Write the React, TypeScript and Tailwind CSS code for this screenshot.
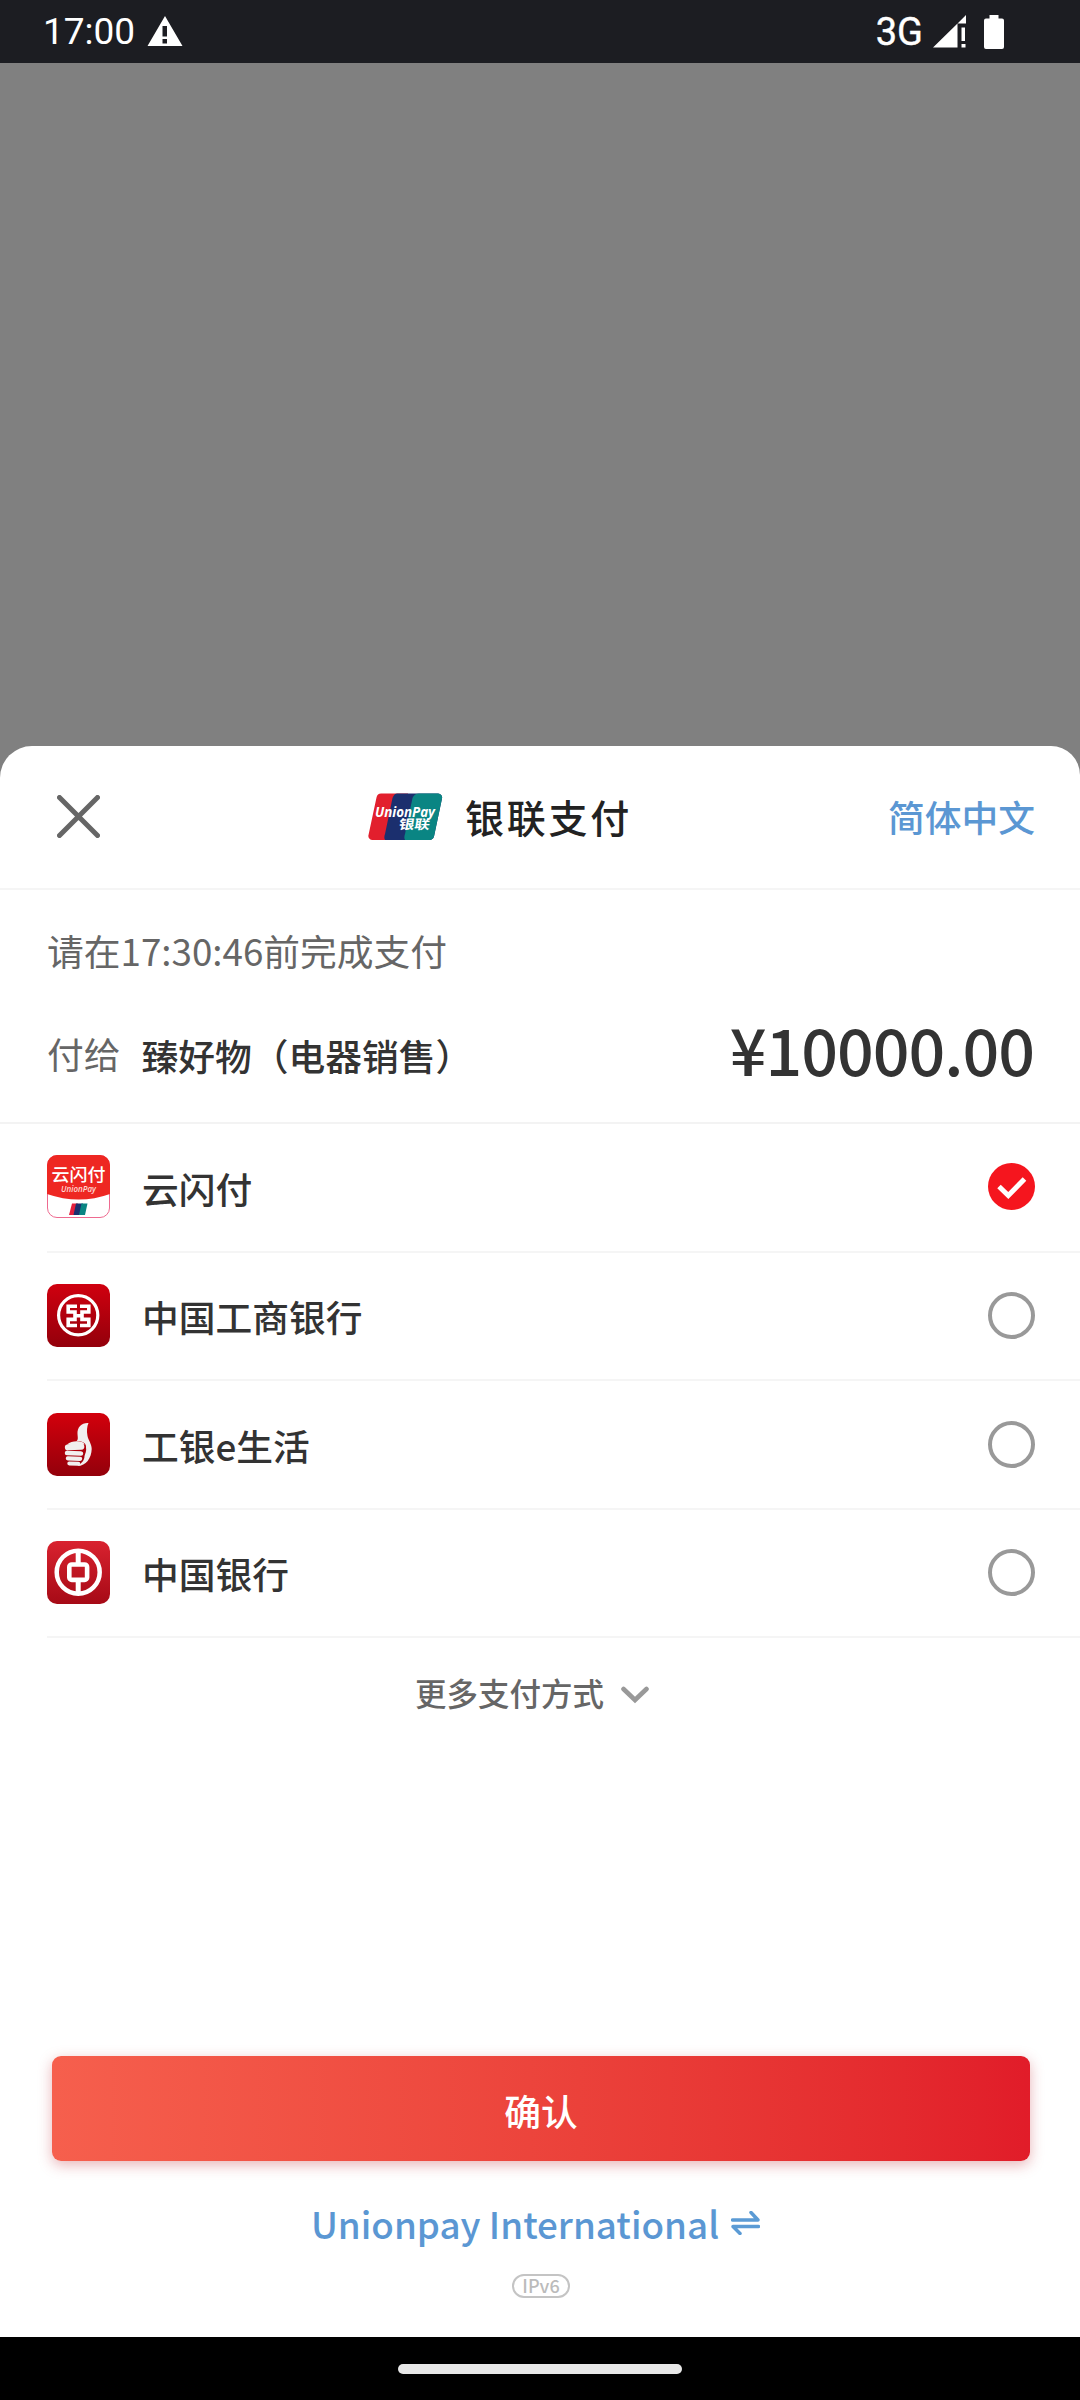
import { useState } from "react";
import type { ReactNode } from "react";

function StatusBar() {
  return (
    <div className="flex h-[63px] items-center justify-between bg-[#1c1d22] pl-[43px] pr-[76px] font-['Roboto',sans-serif] text-white">
      <div className="flex items-center">
        <span className="text-[37px] leading-[60px]">17:00</span>
        <svg width="36" height="32" viewBox="0 0 36 32" className="ml-[12px]">
          <path
            fill="#fff"
            fillRule="evenodd"
            d="M18 0 35.500 30H.5ZM15.500 10v10.500h4.500V10Zm0 13v4.500h4.500V23Z"
          />
        </svg>
      </div>
      <div className="flex items-center">
        <span className="text-[38px] leading-[60px] [-webkit-text-stroke:0.400px_white]">3G</span>
        <svg width="34" height="34" viewBox="0 0 34 34" className="mb-[2px] ml-[10px]">
          <path
            fill="#fff"
            d="M0 33.500 24.500 9.500V33.500ZM33 1v8.500H24.500ZM28.500 13.500h3.500V27h-3.500ZM28.500 30h4v3.500h-4Z"
          />
        </svg>
        <svg width="20" height="34" viewBox="0 0 20 34" className="ml-[17px]">
          <path
            fill="#fff"
            d="M5.500 0h9v3.500H18a2 2 0 0 1 2 2V32a2 2 0 0 1-2 2H2a2 2 0 0 1-2-2V5.500a2 2 0 0 1 2-2h3.500Z"
          />
        </svg>
      </div>
    </div>
  );
}

function UnionPayLogo() {
  return (
    <svg width="75" height="48" viewBox="0 0 75 48" className="mt-[2px] overflow-visible">
      <defs>
        <clipPath id="card">
          <path d="M14 0.500H70a4 4 0 0 1 4 5L66 43.500a5 5 0 0 1-4.500 3.500H4a4 4 0 0 1-3.500-5L8.500 4.500a5 5 0 0 1 5.500-4Z" />
        </clipPath>
      </defs>
      <g clipPath="url(#card)">
        <path fill="#e21f2d" d="M0 0h40v48H0Z" />
        <path fill="#1b2f6e" d="M29 0h46v48H19Q15 47 17 41L24.500 5Q26 1 29 0Z" />
        <path fill="#0a8583" d="M51 0h24v48H39Q35 47 37 41L44.500 5Q46 1 51 0Z" />
      </g>
      <text
        x="7"
        y="23.500"
        textLength="60"
        lengthAdjust="spacingAndGlyphs"
        className="fill-white font-['Open_Sans',sans-serif] text-[14.500px] font-bold italic"
      >
        UnionPay
      </text>
      <text
        x="36"
        y="36.500"
        transform="skewX(-9)"
        textLength="31"
        lengthAdjust="spacingAndGlyphs"
        className="fill-white font-['Noto_Sans_CJK_SC',sans-serif] text-[13px] font-bold"
      >
        银联
      </text>
    </svg>
  );
}

function YunShanFuIcon() {
  return (
    <svg width="63" height="63" viewBox="0 0 63 63" className="mb-[2px]">
      <defs>
        <clipPath id="ysf">
          <rect width="63" height="63" rx="10" />
        </clipPath>
      </defs>
      <rect x=".5" y=".5" width="62" height="62" rx="9.500" fill="#fff" stroke="#ee6a90" />
      <path clipPath="url(#ysf)" fill="#ee2722" d="M0 0h63v39Q32 50 0 39Z" />
      <text
        x="4.500"
        y="25.500"
        textLength="54"
        lengthAdjust="spacingAndGlyphs"
        className="fill-white font-['Noto_Sans_CJK_SC',sans-serif] text-[17px] font-medium"
      >
        云闪付
      </text>
      <text
        x="14"
        y="37"
        textLength="35"
        lengthAdjust="spacingAndGlyphs"
        className="fill-[#ffd9d4] font-['Open_Sans',sans-serif] text-[8.500px] font-semibold italic"
      >
        UnionPay
      </text>
      <path fill="#e21f3d" d="M25 48.500h6l-3 11.500h-6Z" />
      <path fill="#1b2f6e" d="M29 48.500h7l-3 11.500h-6.500Z" />
      <path fill="#0a8583" d="M34.500 48.500h6L38 60h-6Z" />
    </svg>
  );
}

function BankTile({ from, to, id, children }: { from: string; to: string; id: string; children: ReactNode }) {
  return (
    <svg width="63" height="63" viewBox="0 0 63 63" fill="none">
      <defs>
        <linearGradient id={id} x1="0" y1="0" x2="0" y2="1">
          <stop stopColor={from} />
          <stop offset="1" stopColor={to} />
        </linearGradient>
      </defs>
      <rect width="63" height="63" rx="10" fill={`url(#${id})`} />
      {children}
    </svg>
  );
}

function IcbcIcon() {
  return (
    <BankTile id="icbc" from="#d0000f" to="#93000b">
      <g stroke="#fff">
        <circle cx="31.200" cy="31.200" r="19.600" strokeWidth="3.200" />
        <path
          strokeWidth="3.600"
          d="M30 22.300H21.200V28H28V31.700M30 41.500H21.200V35.400H28V31.700M33 22.300H41.800V28H35V31.700M33 41.500H41.800V35.400H35V31.700M26.500 31.700H36.500"
        />
      </g>
    </BankTile>
  );
}

function ELifeIcon() {
  return (
    <BankTile id="elife" from="#d3000c" to="#93000b">
      {/* thumb and palm */}
      <path
        fill="#f1efef"
        d="M41.500 10C35 9.500 30 14 30.500 21C30.800 25 31.500 27 29 28.500C35 27.500 39.500 30 39 34.500C39.800 38 38 41 37.500 43C37.500 47 35 50 30.500 53C39 53 44.500 45 44.700 36C44.700 31 41.500 27.500 40.500 23C39.500 18 40 13.500 41.500 10Z"
      />
      {/* fingers */}
      <g fill="#f1efef">
        <path d="M20 31.500Q25 27.500 33 28.500Q37 29 37.500 31.500L30 33Z" />
        <rect x="17.800" y="31" width="19.500" height="6" rx="3" transform="rotate(-3 28 33)" />
        <rect x="17.800" y="38" width="18.500" height="4.600" rx="2.300" transform="rotate(2 28 39)" />
        <rect x="18.800" y="43.500" width="16.500" height="4.200" rx="2.100" transform="rotate(2 28 44)" />
        <rect x="20.300" y="48.600" width="13" height="4" rx="2" transform="rotate(2 28 50)" />
      </g>
    </BankTile>
  );
}

function BocIcon() {
  return (
    <BankTile id="boc" from="#d9222f" to="#a60a16">
      <g stroke="#fff">
        <circle cx="31.200" cy="31.200" r="21.500" strokeWidth="4.500" />
        <rect x="22.300" y="23.500" width="17.800" height="15.400" rx="2.500" strokeWidth="4.600" />
        <path strokeWidth="5" d="M31.200 10V22M31.200 40.500V53" />
      </g>
    </BankTile>
  );
}

const METHODS = [
  { name: "云闪付", Icon: YunShanFuIcon },
  { name: "中国工商银行", Icon: IcbcIcon },
  { name: "工银e生活", Icon: ELifeIcon },
  { name: "中国银行", Icon: BocIcon },
];

function Radio({ checked }: { checked: boolean }) {
  if (checked) {
    return (
      <svg width="47" height="47" viewBox="0 0 47 47" fill="none" className="mb-[2px]">
        <circle cx="23.500" cy="23.500" r="23.500" fill="#f5151e" />
        <path d="M11 23.500 20.300 32.500 36.500 16" stroke="#fff" strokeWidth="5" />
      </svg>
    );
  }
  return (
    <svg width="47" height="47" viewBox="0 0 47 47" fill="none">
      <circle cx="23.500" cy="23.500" r="21.500" stroke="#999" strokeWidth="4" />
    </svg>
  );
}

export default function App() {
  const [selected, setSelected] = useState(0);

  return (
    <div className="flex h-[2400px] w-[1080px] flex-col overflow-hidden bg-[#808080] font-['Noto_Sans_CJK_SC',sans-serif] text-[36.750px] text-[#333]">
      <StatusBar />

      <div className="mt-[683px] flex h-[1591px] flex-col rounded-tl-[32px] rounded-tr-[29px] bg-white">
        <header className="flex h-[144px] items-center border-b-2 border-[#f5f5f5] pb-[2px] pl-[57px] pr-[45px]">
          <button className="shrink-0">
            <svg width="43" height="43" viewBox="0 0 43 43">
              <path d="M2.500 2.500 40.500 40.500M40.500 2.500 2.500 40.500" stroke="#666" strokeWidth="5" strokeLinecap="round" />
            </svg>
          </button>
          <div className="ml-[268px] flex items-center">
            <UnionPayLogo />
            <h1 className="ml-[22px] text-[39px] font-medium leading-[60px] tracking-[2.750px] text-[#222]">银联支付</h1>
          </div>
          <button className="ml-auto pt-[2px] font-medium text-[#5b97d3]">简体中文</button>
        </header>

        <section className="flex h-[234px] flex-col border-b-2 border-[#f3f3f3] pl-[47px] pr-[46px]">
          <p className="mt-[33px] leading-[54px] text-[#666]">请在17:30:46前完成支付</p>
          <div className="mt-[24px] flex h-[100px] items-center">
            <span className="pt-[5px] text-[#666]">付给</span>
            <span className="ml-[21px] pt-[9px] font-medium">臻好物（电器销售）</span>
            <span className="ml-auto pb-[7px] text-[64.500px] font-medium leading-[80px] tracking-[-1px]">¥10000.00</span>
          </div>
        </section>

        <ul>
          {METHODS.map(({ name, Icon }, i) => (
            <li
              key={name}
              onClick={() => setSelected(i)}
              className="ml-[47px] flex h-[128.500px] items-center border-b-2 border-[#f5f5f5] pr-[45px]"
            >
              <Icon />
              <span className="ml-[32px] pt-[1px] font-medium leading-[54px]">{name}</span>
              <span className="ml-auto">
                <Radio checked={i === selected} />
              </span>
            </li>
          ))}
        </ul>

        <button className="mr-[16px] mt-[31px] flex h-[48px] items-center self-center text-[31.500px] font-medium text-[#666]">
          更多支付方式
          <svg width="28" height="18" viewBox="0 0 28 18" fill="none" className="ml-[17px] mt-[3px]">
            <path d="M2.500 3 14 14 25.500 3" stroke="#999" strokeWidth="4.600" strokeLinecap="round" />
          </svg>
        </button>

        <button className="ml-[52px] mt-auto flex h-[105px] w-[978px] shrink-0 items-center justify-center rounded-[9px] bg-linear-to-r from-[#f65f4d] to-[#e11c29] pt-[4px] font-medium text-white shadow-[0_4px_14px_rgba(190,40,50,0.35)]">
          确认
        </button>

        <a className="mr-[9px] mt-[34px] flex h-[56px] items-center self-center text-[36.750px] font-medium leading-[56px] text-[#5b97d3]">
          Unionpay International
          <svg width="29" height="24" viewBox="0 0 29 24" fill="none" className="ml-[12px]">
            <path
              d="M1.500 9H27L20 1.500M27.500 15.500H2L9 22.500"
              stroke="#5b9bd5"
              strokeWidth="3.500"
              strokeLinecap="round"
              strokeLinejoin="round"
            />
          </svg>
        </a>

        <div className="mb-[39px] ml-[512px] mt-[23px] flex h-[24px] w-[58px] items-center justify-center rounded-full border-2 border-[#c4c4c4] pb-[2px] text-[18px] font-medium leading-none text-[#bbb]">
          IPv6
        </div>
      </div>

      <div className="flex h-[63px] items-center justify-center bg-black">
        <div className="h-[10px] w-[284px] rounded-full bg-[#e8e8e8]" />
      </div>
    </div>
  );
}
